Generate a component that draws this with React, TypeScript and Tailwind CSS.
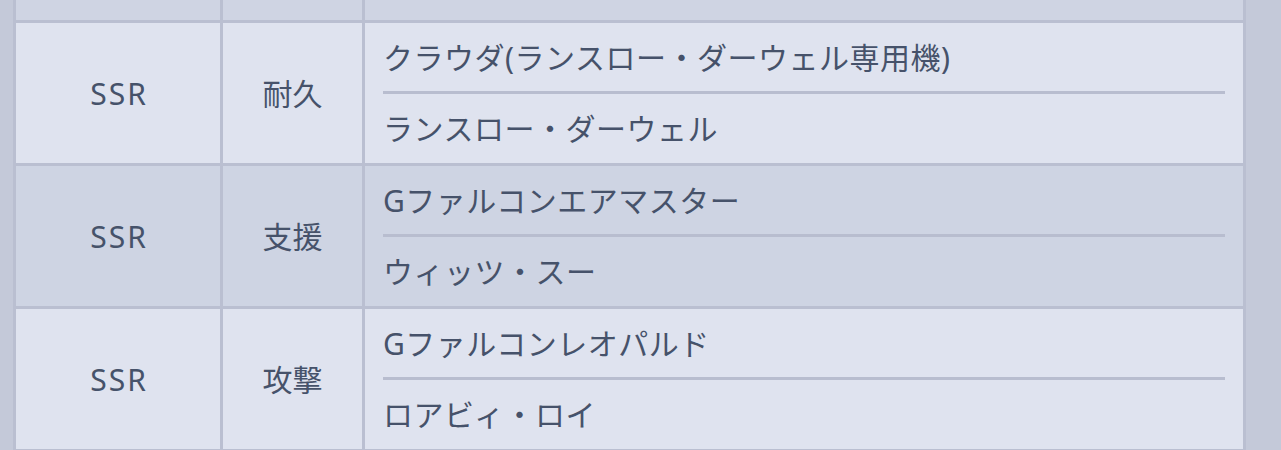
import React from "react";

const rows = [
  { rarity: "SSR", type: "耐久", items: ["クラウダ(ランスロー・ダーウェル専用機)", "ランスロー・ダーウェル"], dark: false },
  { rarity: "SSR", type: "支援", items: ["Gファルコンエアマスター", "ウィッツ・スー"], dark: true },
  { rarity: "SSR", type: "攻撃", items: ["Gファルコンレオパルド", "ロアビィ・ロイ"], dark: false },
];

export default function App() {
  return (
    <div
      className="w-[1281px] h-[450px] overflow-hidden bg-[#c4c9d9] pl-[13px] pr-[35px] text-[#46526a]"
      style={{ fontFamily: '"Noto Sans", "Noto Sans CJK JP", sans-serif' }}
    >
      <div className="-mt-[3px] grid grid-cols-[204px_139px_1fr] gap-[3px] bg-[#babfd1] p-[3px] text-[30px] font-normal">
        <div className="h-[20px] bg-[#cfd4e3]" />
        <div className="h-[20px] bg-[#cfd4e3]" />
        <div className="h-[20px] bg-[#cfd4e3]" />
        {rows.map((r, i) => {
          const bg = r.dark ? "bg-[#ced4e3]" : "bg-[#dfe3ef]";
          return (
            <React.Fragment key={i}>
              <div className={`${bg} h-[140px] flex items-center justify-center tracking-[2px] pl-[2px]`}>{r.rarity}</div>
              <div className={`${bg} h-[140px] flex items-center justify-center`}>{r.type}</div>
              <div className={`${bg} h-[140px] flex flex-col px-[18px] tracking-[0.5px]`}>
                <div className="h-[68px] flex items-center">{r.items[0]}</div>
                <div className="h-[3px] bg-[#b8bdcf]" />
                <div className="h-[69px] flex items-center">{r.items[1]}</div>
              </div>
            </React.Fragment>
          );
        })}
      </div>
    </div>
  );
}
